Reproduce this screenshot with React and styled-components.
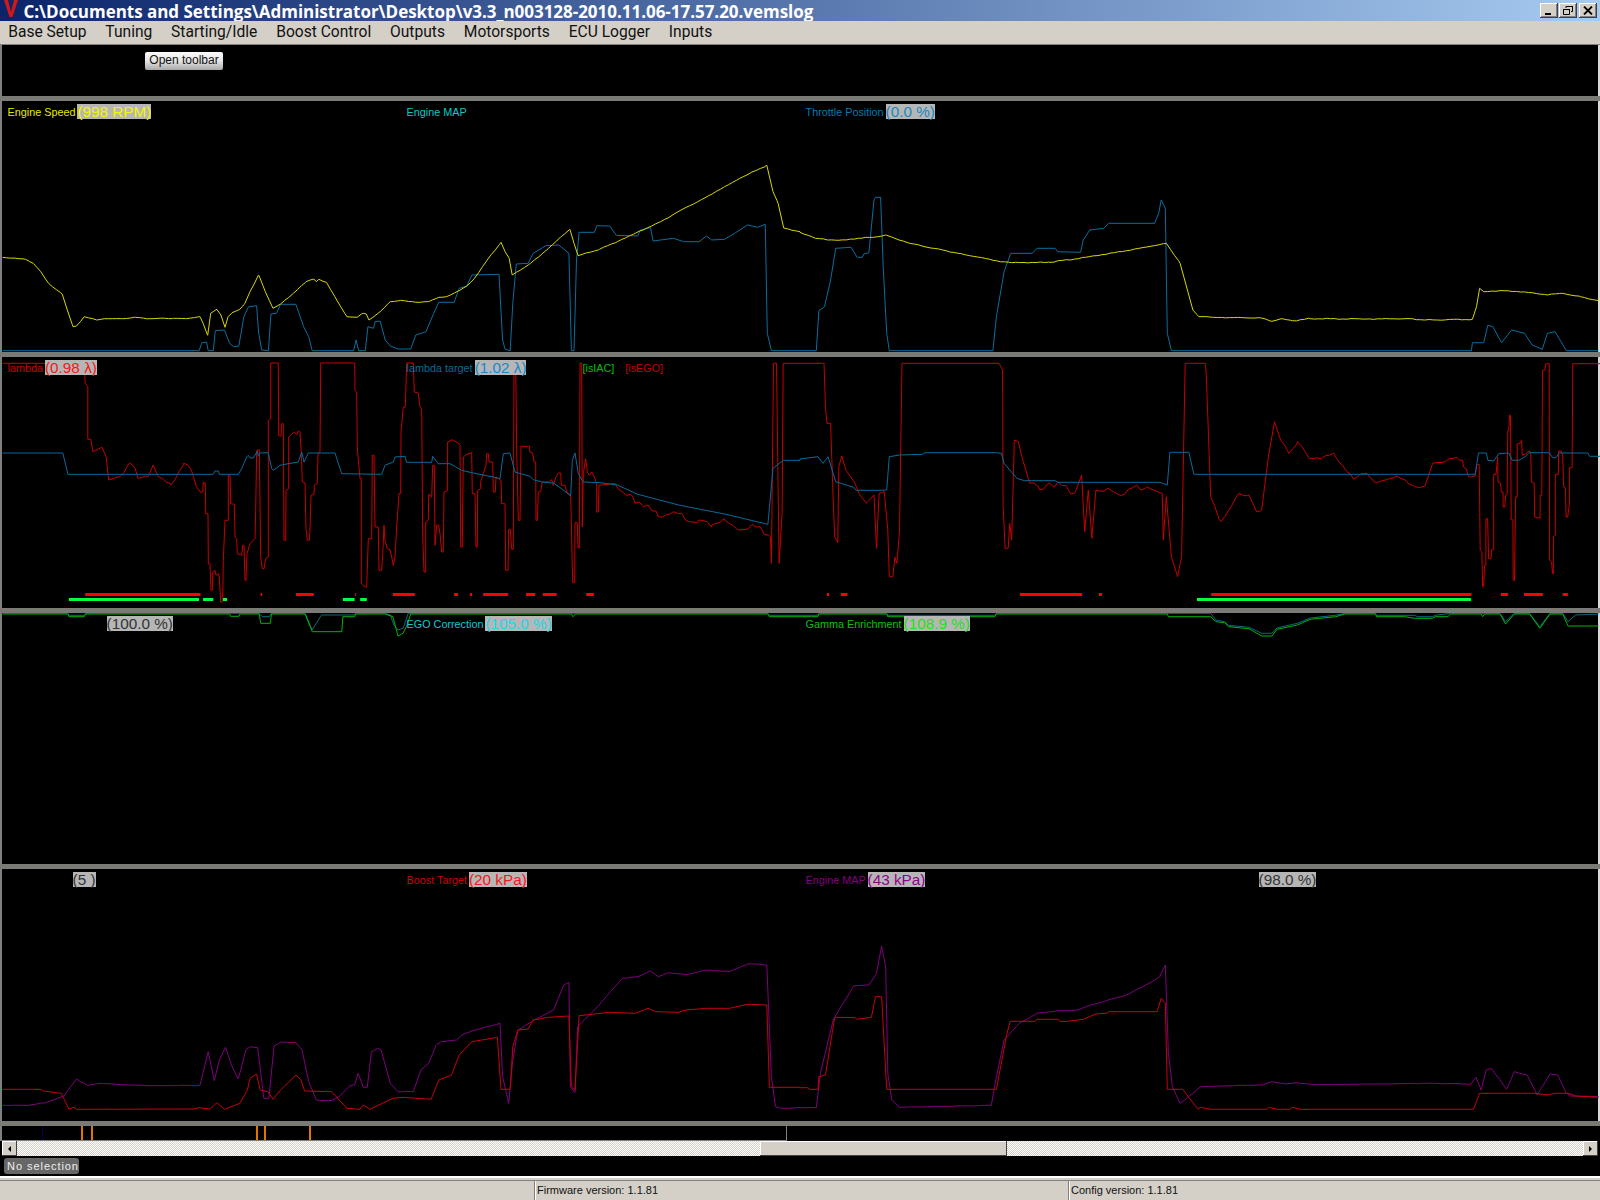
import React from "react";
import styled, { createGlobalStyle } from "styled-components";

const Global = createGlobalStyle`
  html, body { margin: 0; padding: 0; background: #000; }
  * { box-sizing: border-box; }
`;

const Window = styled.div`
  width: 1600px; height: 1200px; display: flex; flex-direction: column;
  background: #000; overflow: hidden;
  font-family: "Liberation Sans", Arial, sans-serif;
`;
const TitleBar = styled.div`
  height: 21px; flex: none; display: flex; align-items: flex-start;
  background: linear-gradient(90deg, #0a246a 0%, #a6caf0 100%);
`;
const Logo = styled.svg`
  width: 16px; height: 18px; margin: 0 4.5px 0 3px; flex: none;
`;
const TitleText = styled.div`
  flex: 1; color: #fff; font-weight: 700; font-size: 17px; line-height: 23px;
  white-space: nowrap; letter-spacing: -0.03px;
  font-family: "Open Sans", "Liberation Sans", sans-serif;
`;
const WinButtons = styled.div`
  display: flex; margin: 3px 3px 0 0; flex: none;
`;
const WinButton = styled.div`
  width: 18px; height: 15px; background: #d4d0c8;
  margin-left: ${p => p.$gap}px; display: flex; align-items: center; justify-content: center;
  box-shadow: inset -1px -1px 0 #404040, inset 1px 1px 0 #fff, inset -2px -2px 0 #808080;
`;
const MenuBar = styled.div`
  height: 24px; flex: none; background: #d4d0c8; display: flex;
  border-bottom: 1px solid #808080; align-items: flex-start;
`;
const MenuItem = styled.div`
  font-family: Roboto, "Liberation Sans", sans-serif;
  font-size: 15.6px; line-height: 23px; color: #111; padding: 0 9.4px; white-space: nowrap;
  &:first-child { padding-left: 8.2px; }
`;
const ToolbarArea = styled.div`
  height: 51px; flex: none; background: #000; padding: 7px 0 0 143px;
  border-left: 2px solid #808080; border-right: 2px solid #d8d8d8;
`;
const OpenButton = styled.button`
  width: 78px; height: 18px; padding: 0 0 2px; border: 0; border-radius: 2px;
  background: linear-gradient(180deg, #fbfbfb 0%, #e4e4e4 50%, #a8a8a8 100%);
  font-family: "Liberation Sans", sans-serif; font-size: 12px; color: #111;
  display: block;
`;
const Sep = styled.div`
  height: 5px; flex: none; background: #7a7b77;
`;
const Panel = styled.div`
  position: relative; height: ${p => p.$h}px; flex: none; background: #000;
  border-left: 2px solid #808080; border-right: 2px solid #d8d8d8;
  padding: 3px 0 0 5.6px; display: grid; grid-template-columns: repeat(4, 399px);
  align-content: start;
`;
const ChartSvg = styled.svg`
  position: absolute; left: -2px; top: 0; width: 1600px; height: 100%;
  pointer-events: none;
`;
const Cell = styled.div`
  position: relative; z-index: 1; display: flex; align-items: center; height: 15px;
  padding-left: ${p => p.$indent || 0}px; white-space: nowrap;
`;
const Name = styled.span`
  font-size: 10.8px; line-height: 15px; color: ${p => p.$c}; margin-right: 2px; position: relative; top: 1px;
`;
const Value = styled.span`
  font-size: 15.3px; line-height: 15px; height: 15px; color: ${p => p.$c};
  background: #b6b6b6;
`;
const Flag = styled.span`
  font-size: 10.8px; line-height: 15px; color: ${p => p.$c}; margin-left: ${p => p.$gap}px; position: relative; top: 1px;
`;
const EventTrack = styled.div`
  height: 15px; flex: none; position: relative; background: #000;
`;
const EventBox = styled.div`
  position: absolute; left: 0; top: 0; bottom: 0; width: 787px;
  border-left: 2px solid #808080; border-right: 1px solid #808080; border-bottom: 1px solid #808080;
`;
const EventMark = styled.div`
  position: absolute; top: 0; bottom: 0; width: ${p => p.$w}px; background: ${p => p.$c};
`;
const ScrollBar = styled.div`
  height: 15px; flex: none; display: flex; padding: 0 2px; background: #000;
`;
const ScrollArrow = styled.div`
  width: 15px; flex: none; background: #d4d0c8; display: flex; align-items: center; justify-content: center;
  box-shadow: inset -1px -1px 0 #404040, inset 1px 1px 0 #fff;
  &::before {
    content: ""; width: 0; height: 0; border: 3px solid transparent;
    ${p => p.$dir === "left"
      ? "border-right: 3px solid #000; border-left: 0;"
      : "border-left: 3px solid #000; border-right: 0;"}
  }
`;
const ScrollTrough = styled.div`
  flex: ${p => p.$grow ? "1" : `none`}; width: ${p => p.$w ? p.$w + "px" : "auto"};
  background: repeating-conic-gradient(#d4d0c8 0 25%, #fff 0 50%) 0 0 / 2px 2px;
`;
const ScrollThumb = styled.div`
  width: 247px; flex: none; background: #d4d0c8;
  box-shadow: inset -1px -1px 0 #404040, inset 1px 1px 0 #fff;
`;
const Footer = styled.div`
  height: 20px; flex: none; background: #000; padding: 2px 0 0 4px;
`;
const Pill = styled.div`
  width: 75px; height: 16px; border-radius: 3px; background: #676767; color: #eee;
  font-size: 11px; line-height: 16px; letter-spacing: 0.95px; padding-left: 3px; white-space: nowrap;
`;
const StatusBar = styled.div`
  flex: 1; background: #d4d0c8; border-top: 2px solid #fff; padding-top: 2px;
  display: grid; grid-template-columns: 534px 534px 1fr;
`;
const StatusCell = styled.div`
  border-top: 1px solid #808080; padding-left: 2px;
  border-left: ${p => p.$first ? "0" : "1px solid #808080"};
  box-shadow: ${p => p.$first ? "none" : "inset 1px 0 0 #fff"};
  font-size: 11px; line-height: 19px; color: #111; white-space: nowrap;
`;

/* Traces are measured on crops of the frame: each piece has an x offset and scale and a y offset and scale. */
const LEFT = y0 => [0, 1.96, y0, 3];
const RIGHT = y0 => [800, 1.96, y0, 3];
const FINE = [200, 3, 357, 3];
const FINE2 = [1460, 2.97, 357, 3];

const parse = str => str.trim().split(/\s+/).map(p => p.split(",").map(Number));
const noise = x => (Math.sin(x * 0.37) + Math.sin(x * 0.13 + 1) + Math.sin(x * 0.91 + 2)) / 3;
const rough = (str, amp, from = -1, to = 1e9) => {
  const pts = parse(str);
  const out = [];
  pts.forEach(([x, y], i) => {
    if (i > 0) {
      const [px, py] = pts[i - 1];
      const steep = Math.abs(y - py) / Math.max(1, x - px) > 4;
      if (!steep && px >= from && x <= to) {
        for (let q = px + 8; q < x; q += 8) {
          const yy = py + (y - py) * (q - px) / (x - px);
          out.push(`${q},${(yy + amp * noise(q)).toFixed(1)}`);
        }
      }
    }
    out.push(`${x},${y}`);
  });
  return out.join(" ");
};
const conv = (str, [xo, xs, yo, ys]) =>
  parse(str).map(([x, y]) => `${(xo + x / xs).toFixed(1)},${(yo + y / ys).toFixed(1)}`).join(" ");
const Trace = ({ parts, c, w = 1 }) => (
  <polyline points={parts.map(([s, f]) => conv(s, f)).join(" ")} fill="none" stroke={c} strokeWidth={w} strokeLinejoin="round" />
);

const yellowL = "5,472 50,478 65,490 80,515 95,550 122,582 132,630 143,680 150,678 165,650 190,660 205,656 240,656 265,652 290,656 340,655 365,656 392,650 398,670 407,706 413,640 425,628 433,645 441,682 447,650 455,638 470,628 480,610 490,575 507,525 520,575 535,625 550,612 575,580 600,545 615,537 620,545 625,538 640,547 660,600 680,650 700,652 712,640 718,642 723,660 745,635 765,605 785,601 815,607 840,605 860,592 875,590 900,572 915,558 930,535 955,480 982,427 990,455 998,475 1004,525 1040,490 1075,445 1100,410 1117,388 1125,430 1133,467 1175,448 1210,425 1245,400 1295,365 1335,330 1380,295 1450,235 1503,196 1515,275 1525,310 1536,384 1568,395";
const yellowR = "0,397 30,415 75,421 120,415 170,406 215,430 300,457 385,482 415,488 490,487 560,472 640,452 718,430 745,490 770,630 782,650 810,652 905,654 925,664 945,656 965,662 1000,656 1100,657 1200,656 1225,660 1318,658 1326,620 1332,565 1340,575 1380,572 1435,578 1465,585 1495,580 1530,590 1565,602";
const tpsL = "5,752 390,752 396,728 405,726 408,752 418,752 422,692 440,690 450,730 458,740 468,738 478,650 487,620 503,617 507,700 513,750 526,752 531,642 542,640 550,613 580,613 595,680 605,710 612,752 693,752 698,720 703,752 716,752 721,680 732,685 735,665 745,663 755,720 765,738 780,747 805,747 815,705 835,695 850,640 860,607 890,607 900,565 915,558 925,525 978,523 985,720 990,748 1000,752 1005,610 1012,492 1035,490 1045,460 1070,437 1095,435 1115,460 1120,752 1125,752 1130,480 1135,397 1165,397 1170,377 1195,378 1208,406 1250,408 1255,390 1275,383 1280,423 1320,415 1340,425 1370,425 1385,408 1395,420 1420,418 1440,400 1465,375 1485,382 1500,373 1504,700 1512,752 1568,752";
const tpsR = "0,752 32,752 37,632 48,620 60,540 70,445 100,442 112,472 122,472 125,462 135,458 145,300 148,292 158,292 163,500 170,700 175,752 378,752 385,650 400,515 413,460 455,460 465,445 500,445 505,455 550,457 555,420 568,390 595,385 605,370 695,370 703,340 708,300 716,325 720,700 728,752 1316,752 1318,728 1340,728 1348,676 1358,680 1375,728 1395,690 1420,700 1435,735 1455,748 1465,700 1480,695 1502,752 1565,752";

const lambdaA = rough("5,40 165,40 167,100 172,110 172,268 178,268 182,305 200,292 208,320 213,390 235,380 255,338 265,355 270,385 290,380 300,345 310,380 335,405 360,340 375,360 385,410 392,425", 7, 213);
const lambdaFine = "0,405 8,405 10,376 16,378 17,470 24,470 25,620 30,620 33,700 37,700 38,645 45,640 48,655 55,650 58,660 62,735 68,735 70,610 75,490 85,490 85,355 90,355 92,440 103,442 105,540 110,545 112,590 125,595 128,565 132,565 135,670 138,670 141,590 150,560 165,545 167,460 170,280 178,278 182,600 187,635 192,635 197,605 205,600 205,190 212,185 212,18 235,18 236,235 243,238 245,200 250,200 252,550 257,550 258,400 266,395 266,240 275,232 283,225 290,232 295,222 300,225 304,290 307,375 315,378 318,515 322,550 328,550 330,520 333,415 342,412 343,385 352,380 354,290 360,285 362,18 464,18 465,100 470,105 472,272 480,365 484,365 484,680 495,690 500,690 505,545 515,545 517,295 522,295 525,510 535,510 537,640 545,640 548,595 552,505 555,550 562,575 570,578 575,600 580,625 585,600 590,510 597,410 602,410 603,225 610,150 616,150 620,18 640,18 643,105 655,108 660,150 665,155 668,540 672,645 677,645 677,495 685,490 686,412 695,420 698,325 703,325 705,565 710,505 716,505 720,530 725,585 730,585 732,405 742,402 743,255 757,248 775,258 780,265 782,570 787,570 790,300 800,292 815,287 817,410 825,410 828,570 832,570 833,400 842,395 842,375 850,350 858,325 860,290 865,290 867,315 878,315 880,405 886,405 888,360 903,370 905,440 915,440 917,640 924,640 926,517 931,517 935,577 940,577 942,18 947,18 950,280 955,490 960,490 963,268 988,268 990,285 998,288 1002,315 1007,315 1008,490 1012,490 1015,405 1022,403 1027,375 1045,375 1055,368 1060,385 1068,360 1075,348 1082,348 1084,385 1095,385 1100,405 1112,415 1118,677 1124,677 1125,497 1132,497 1134,573 1138,573 1140,18 1145,18 1147,510 1150,350 1157,305 1162,345 1168,355 1175,345 1185,365 1190,380 1190,465 1195,465 1197,385 1200,385";
const lambdaB = rough("1205,400 1220,425 1240,440 1245,460 1270,465 1290,500 1320,485 1350,515 1370,510 1395,525 1420,510 1450,540 1490,530 1510,560 1512,640 1516,40 1522,40 1527,640 1533,490 1535,40 1568,40", 12, 1205, 1510);
const lambdaRstr = "0,40 47,40 50,175 53,220 60,220 65,450 68,560 74,578 76,350 82,318 90,360 108,400 115,430 130,460 145,435 150,595 155,430 165,425 172,540 175,680 182,680 186,622 190,640 195,545 200,40 390,40 397,60 398,465 402,595 408,595 411,520 415,570 420,270 428,275 435,320 450,400 470,420 490,400 540,425 552,375 558,545 565,420 572,565 580,420 620,430 680,410 710,430 712,570 718,440 728,620 740,680 748,620 755,40 795,40 797,100 805,440 825,515 845,470 860,430 880,435 895,485 905,480 918,320 930,215 942,270 958,310 975,275 998,325 1048,315 1085,388 1110,368 1130,398 1170,378 1205,410 1225,408 1240,340 1280,325 1292,330";
const lambdaC = rough(rough(lambdaRstr, 16, 435, 710), 7, 805, 1292);
const lambdaFine2 = "0,310 8,310 10,330 18,335 25,358 30,360 45,357 50,322 57,322 60,580 65,585 67,688 70,688 73,625 77,625 77,485 82,485 85,605 92,605 94,578 100,578 100,352 107,352 112,300 113,375 120,378 123,405 128,405 128,450 133,450 135,415 140,412 142,220 145,220 147,175 150,175 152,488 157,488 158,670 162,670 165,420 170,420 170,260 180,258 183,250 185,295 195,290 205,282 210,285 212,375 220,378 222,480 238,484 238,415 243,415 245,40 252,40 255,20 265,20 266,610 272,615 275,650 277,650 278,538 283,535 283,352 292,352 293,282 300,282 305,295 308,390 313,392 315,480 320,480 325,440 325,332 333,332 335,20 416,20";

const targetA = "5,309 123,309 133,373 392,373";
const targetFine = "0,352 40,352 45,342 55,342 58,352 115,352 125,335 140,300 145,295 150,303 160,303 172,283 175,298 180,288 205,287 215,335 220,340 240,325 265,320 295,315 305,285 312,315 325,288 405,288 425,350 545,352 555,325 580,315 585,300 615,298 620,316 695,316 698,298 715,320 750,320 785,340 820,348 880,360 900,365 910,290 930,288 945,345 990,358 1000,368 1025,375 1060,378 1085,395 1112,417 1117,310 1125,288 1135,350 1150,375 1200,377";
const targetB = "1210,405 1250,433 1330,465 1420,492 1505,523 1515,355 1535,331 1568,331";
const targetC = "0,327 35,320 45,340 55,320 70,395 105,412 110,421 160,421 170,420 175,320 195,315 240,313 245,308 385,308 395,310 400,340 425,385 440,392 500,392 505,397 705,397 720,405 725,307 762,307 772,373 1292,373";
const targetFine2 = "0,352 45,352 50,320 55,288 78,288 83,310 100,312 115,290 145,288 155,310 175,310 195,298 205,287 265,287 275,302 285,302 295,288 380,288 385,298 416,298";

const egoL = "5,790 133,790 135,796 165,796 168,790 508,790 514,800 528,800 532,790 598,790 612,840 618,825 630,795 695,795 697,790 755,790 765,795 772,825 780,840 790,835 800,790 1505,790 1508,796 1568,796";
const egoR = "0,796 35,796 37,790 170,790 172,796 382,796 385,790 805,790 815,810 832,815 840,826 880,832 905,850 925,850 935,834 975,820 1000,804 1050,796 1068,790 1128,790 1130,796 1205,796 1210,800 1240,800 1245,796 1275,790 1372,790 1383,815 1400,790 1430,790 1450,830 1470,790 1495,790 1505,815 1520,795 1565,792";
const gammaL = "5,792 133,792 135,800 165,800 168,792 450,792 452,799 468,799 470,792 508,792 511,820 530,820 532,792 598,792 612,845 670,845 672,800 695,800 697,792 755,792 770,800 780,858 790,850 798,825 805,792 1120,792 1123,800 1128,792 1505,792 1508,800 1568,800";
const gammaR = "0,800 35,800 37,792 170,792 172,800 382,800 385,792 720,792 722,800 805,800 815,815 832,818 840,830 880,836 905,858 925,858 935,838 975,825 1000,808 1050,800 1068,792 1128,792 1130,800 1185,800 1205,805 1240,805 1245,800 1270,800 1275,792 1335,792 1338,800 1342,792 1372,792 1383,822 1400,792 1430,792 1450,835 1470,792 1495,792 1505,828 1565,828";

const mapL = "5,736 55,736 90,728 125,708 150,657 172,676 195,670 250,675 300,677 392,676 408,575 420,662 430,600 442,562 455,620 467,657 482,570 490,560 505,563 517,715 527,715 537,558 550,546 580,548 592,570 605,665 620,720 650,722 665,710 685,678 695,675 702,640 712,682 720,682 728,575 740,565 747,570 765,670 780,695 810,695 825,630 840,610 855,555 865,545 895,540 905,525 925,513 980,490 985,650 997,730 1005,600 1015,510 1050,478 1085,450 1105,375 1115,367 1118,680 1127,698 1132,500 1165,450 1220,355 1250,350 1275,333 1290,350 1310,338 1345,344 1385,330 1430,335 1465,312 1490,313 1503,315 1512,650 1520,740 1530,745 1568,743";
const mapR = "0,743 32,743 40,640 65,480 105,378 135,375 150,340 160,258 168,320 172,640 180,720 195,742 250,740 375,736 385,650 400,540 430,490 465,460 500,453 545,450 570,435 640,405 690,365 705,350 716,315 722,580 730,680 745,730 770,700 785,680 850,677 905,675 925,665 950,672 970,668 1010,674 1130,672 1240,670 1315,672 1325,652 1335,690 1345,630 1355,625 1385,688 1400,635 1425,645 1445,705 1470,642 1485,645 1502,700 1510,708 1565,710";
const boostL = "5,688 80,688 85,693 120,700 135,747 145,742 150,748 380,747 388,743 412,747 425,728 440,748 470,730 485,690 490,655 503,642 510,690 525,695 535,718 550,690 580,645 590,660 597,693 650,695 680,745 705,748 712,735 725,748 770,715 790,712 845,718 860,660 885,645 900,585 925,545 975,532 982,688 1000,688 1005,560 1015,510 1035,507 1045,480 1075,472 1115,468 1120,680 1127,690 1135,467 1195,457 1245,460 1270,445 1285,455 1330,457 1345,450 1385,445 1430,445 1465,433 1503,435 1508,682 1568,682";
const boostR = "0,683 15,683 18,688 35,688 37,650 50,645 68,472 108,473 112,478 140,472 148,410 160,410 170,688 385,688 405,525 412,484 460,484 465,478 505,478 510,484 525,484 555,478 580,462 600,460 605,455 700,455 708,415 716,430 720,688 750,688 780,748 785,742 805,748 915,748 920,742 935,748 960,748 965,742 980,748 1320,748 1332,700 1440,700 1465,705 1480,700 1505,700 1520,708 1565,712";

const two = (a, b, y0) => [[a, LEFT(y0)], [b, RIGHT(y0)]];

const redBars = [[167,393],[511,514],[580,615],[696,698],[770,813],[890,898],[921,925],[947,996],[1031,1049],[1064,1091],[1149,1164]]
  .map(([a,b]) => [a/1.96, b/1.96])
  .concat([[53,57],[80,93],[431,553],[586,592],[806,1316],[1374,1388],[1419,1456],[1495,1505]].map(([a,b]) => [800+a/1.96, 800+b/1.96]));
const greenBars = [[135,390],[398,418],[437,445],[672,695],[706,719]]
  .map(([a,b]) => [a/1.96, b/1.96])
  .concat([[778,1315]].map(([a,b]) => [800+a/1.96, 800+b/1.96]));

const Chart = ({ top, h, children }) => (
  <ChartSvg viewBox={`0 ${top} 1600 ${h}`} preserveAspectRatio="none">{children}</ChartSvg>
);

const menus = ["Base Setup","Tuning","Starting/Idle","Boost Control","Outputs","Motorsports","ECU Logger","Inputs"];
const marks = [[42,"#000060",1],[81,"#e07800",1.5],[91,"#e07800",1.5],[256,"#e07800",1.5],[264,"#e07800",1.5],[309,"#e07800",1.5]];

export default function App() {
  return (
    <>
      <Global />
      <Window>
        <TitleBar>
          <Logo viewBox="0 0 16 18"><path d="M1 0h4l3 12 3-12h4L9.5 17h-3z" fill="#d01818" /></Logo>
          <TitleText>C:\Documents and Settings\Administrator\Desktop\v3.3_n003128-2010.11.06-17.57.20.vemslog</TitleText>
          <WinButtons>
            <WinButton $gap={0}><svg width="10" height="9" viewBox="0 0 10 9"><rect x="1" y="7" width="6" height="2" fill="#000" /></svg></WinButton>
            <WinButton $gap={1}><svg width="10" height="9" viewBox="0 0 10 9"><path d="M3 2V0.5h6.5v5H8M0.5 3.5h6v5h-6z" fill="none" stroke="#000" /><path d="M0 3h7v1H0zM3 0h7v1H3z" fill="#000" /></svg></WinButton>
            <WinButton $gap={2}><svg width="10" height="9" viewBox="0 0 10 9"><path d="M1 0.5l8 8M9 0.5l-8 8" stroke="#000" strokeWidth="1.8" /></svg></WinButton>
          </WinButtons>
        </TitleBar>
        <MenuBar>{menus.map(m => <MenuItem key={m}>{m}</MenuItem>)}</MenuBar>
        <ToolbarArea><OpenButton>Open toolbar</OpenButton></ToolbarArea>
        <Sep />
        <Panel $h={251}>
          <Chart top={101} h={251}>
            <Trace parts={two(tpsL, tpsR, 100)} c="#0a6ea0" />
            <Trace parts={two(rough(yellowL, 1.5), rough(yellowR, 2), 100)} c="#d8d800" />
          </Chart>
          <Cell><Name $c="#e8e800">Engine Speed</Name><Value $c="#f4f400">(998 RPM)</Value></Cell>
          <Cell><Name $c="#10c8c8">Engine MAP</Name></Cell>
          <Cell><Name $c="#0a78b0">Throttle Position</Name><Value $c="#1a88c0">(0.0 %)</Value></Cell>
        </Panel>
        <Sep />
        <Panel $h={251}>
          <Chart top={357} h={251}>
            <Trace parts={[[lambdaA, LEFT(350)], [lambdaFine, FINE], [lambdaB, LEFT(350)], [lambdaC, RIGHT(350)], [lambdaFine2, FINE2]]} c="#c80000" />
            <Trace parts={[[targetA, LEFT(350)], [targetFine, FINE], [targetB, LEFT(350)], [targetC, RIGHT(350)], [targetFine2, FINE2]]} c="#0a6a9c" />
            {redBars.map(([a, b]) => <rect key={a} x={a} y={593} width={b - a} height={3} fill="#ff0000" />)}
            {greenBars.map(([a, b]) => <rect key={a} x={a} y={598} width={b - a} height={3} fill="#00ff40" />)}
          </Chart>
          <Cell><Name $c="#d00000">lambda</Name><Value $c="#f41818">(0.98 λ)</Value></Cell>
          <Cell>
            <Name $c="#0a6a9c">lambda target</Name><Value $c="#1a88c8">(1.02 λ)</Value>
            <Flag $c="#00c000" $gap={56}>[isIAC]</Flag><Flag $c="#c80000" $gap={11}>[isEGO]</Flag>
          </Cell>
        </Panel>
        <Sep />
        <Panel $h={251}>
          <Chart top={613} h={251}>
            <Trace parts={two(egoL, egoR, 350)} c="#0a6a7c" />
            <Trace parts={two(gammaL, gammaR, 350)} c="#00b400" />
          </Chart>
          <Cell $indent={99}><Value $c="#333">(100.0 %)</Value></Cell>
          <Cell><Name $c="#10c8d8">EGO Correction</Name><Value $c="#20d8e8">(105.0 %)</Value></Cell>
          <Cell><Name $c="#10c010">Gamma Enrichment</Name><Value $c="#20e020">(108.9 %)</Value></Cell>
        </Panel>
        <Sep />
        <Panel $h={252}>
          <Chart top={869} h={252}>
            <Trace parts={two(rough(mapL, 1), rough(mapR, 1), 860)} c="#800080" />
            <Trace parts={two(boostL, boostR, 860)} c="#c80010" />
          </Chart>
          <Cell $indent={65}><Value $c="#333">(5 )</Value></Cell>
          <Cell><Name $c="#d00000">Boost Target</Name><Value $c="#f41818">(20 kPa)</Value></Cell>
          <Cell><Name $c="#800080">Engine MAP</Name><Value $c="#900090">(43 kPa)</Value></Cell>
          <Cell $indent={54}><Value $c="#333">(98.0 %)</Value></Cell>
        </Panel>
        <Sep />
        <EventTrack>
          <EventBox>
            {marks.map(([x, c, w]) => <EventMark key={x} $c={c} $w={w} style={{ left: x - 2 }} />)}
          </EventBox>
        </EventTrack>
        <ScrollBar>
          <ScrollArrow $dir="left" />
          <ScrollTrough $w={743} />
          <ScrollThumb />
          <ScrollTrough $grow />
          <ScrollArrow $dir="right" />
        </ScrollBar>
        <Footer><Pill>No selection</Pill></Footer>
        <StatusBar>
          <StatusCell $first />
          <StatusCell>Firmware version: 1.1.81</StatusCell>
          <StatusCell>Config version: 1.1.81</StatusCell>
        </StatusBar>
      </Window>
    </>
  );
}
